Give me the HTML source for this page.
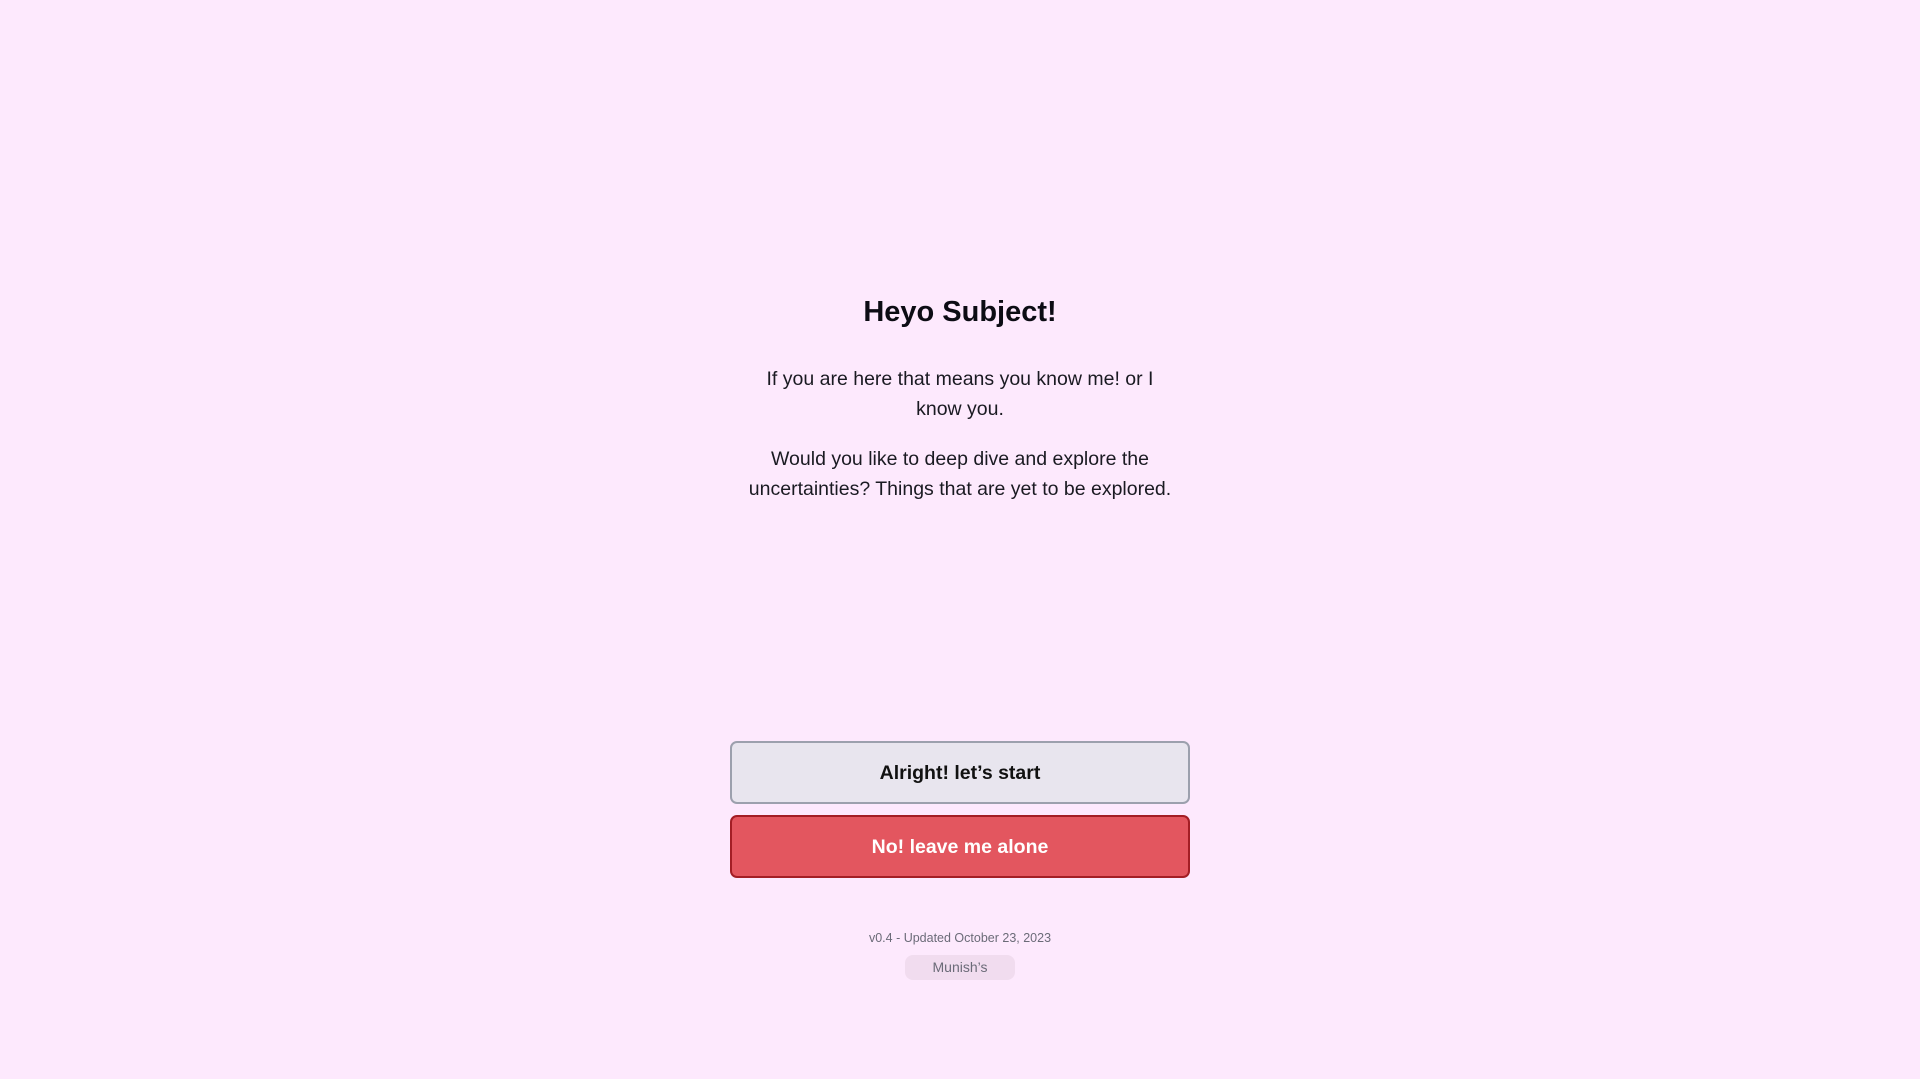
<!DOCTYPE html>
<html><head><meta charset="utf-8"><style>
html,body{margin:0;padding:0;width:1920px;height:1079px;overflow:hidden;background:#fde9fd;font-family:"Liberation Sans",sans-serif;color:#111}
.c{position:absolute;left:0;width:1920px;text-align:center}
h1{position:absolute;left:0;width:1920px;top:292px;margin:0;font-size:29px;font-weight:bold;text-align:center;line-height:40px;color:#0c0c14}
.p{position:absolute;left:730px;width:460px;text-align:center;font-size:19.5px;line-height:30px;color:#1a1a22}
.btn{position:absolute;left:730px;width:460px;height:63px;box-sizing:border-box;border-radius:7px;text-align:center;line-height:61px;font-size:19.5px;font-weight:bold}
.b1{top:741px;background:#e8e5ee;border:2px solid #9ca0ad;color:#111}
.b2{top:815px;background:#e3565f;border:2px solid #a31e25;color:#fff}
.v{top:929px;font-size:12.5px;color:#6b6b78;line-height:18px}
.pill{position:absolute;left:905px;top:955px;width:110px;height:25px;border-radius:8px;background:#f1dcef;color:#6b6b78;font-size:14px;line-height:25px;text-align:center}
</style></head><body>
<h1>Heyo Subject!</h1>
<div class="p" style="top:364px;left:750px;width:420px">If you are here that means you know me! or I know you.</div>
<div class="p" style="top:444px">Would you like to deep dive and explore the uncertainties? Things that are yet to be explored.</div>
<div class="btn b1">Alright! let’s start</div>
<div class="btn b2">No! leave me alone</div>
<div class="c v">v0.4 - Updated October 23, 2023</div>
<div class="pill">Munish’s</div>
</body></html>
